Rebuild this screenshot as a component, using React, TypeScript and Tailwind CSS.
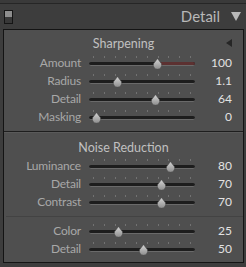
import React from "react";

type Row = { label: string; value: string; pos: number; red?: boolean };

const sharpening: Row[] = [
  { label: "Amount", value: "100", pos: 64, red: true },
  { label: "Radius", value: "1.1", pos: 26 },
  { label: "Detail", value: "64", pos: 62 },
  { label: "Masking", value: "0", pos: 6.5 },
];

const noise: Row[] = [
  { label: "Luminance", value: "80", pos: 76 },
  { label: "Detail", value: "70", pos: 68 },
  { label: "Contrast", value: "70", pos: 68 },
];

const color: Row[] = [
  { label: "Color", value: "25", pos: 27 },
  { label: "Detail", value: "50", pos: 51 },
];

function Thumb() {
  return (
    <svg width="11" height="11" viewBox="0 0 11 11">
      <defs>
        <linearGradient id="tg" x1="0" y1="0" x2="0" y2="1">
          <stop offset="0" stopColor="#d6d6d6" />
          <stop offset="1" stopColor="#8c8c8c" />
        </linearGradient>
      </defs>
      <path d="M5.5 0.5 L9.4 5.6 A4.2 4.2 0 1 1 1.6 5.6 Z" fill="url(#tg)" stroke="#3a3a3a" strokeWidth="0.6" />
    </svg>
  );
}

function Slider({ row }: { row: Row }) {
  return (
    <div className="flex h-[18px] items-center">
      <div className="w-[77px] text-right text-[12px] leading-none tracking-[-0.2px] text-[#a8a8a8]">{row.label}</div>
      <div className="relative ml-[8px] h-[18px] w-[106px]">
        {/* tick marks */}
        <div className="absolute left-[4px] right-[4px] top-[2px] flex justify-between">
          {Array.from({ length: 10 }).map((_, i) => (
            <div key={i} className="h-[2px] w-px bg-[#727272]" />
          ))}
        </div>
        <div className="absolute left-0 right-0 top-[8px] h-[4px] overflow-hidden rounded-full border-b border-[#6a6a6a] bg-[#1d1d1d]">
          {row.red && (
            <div
              className="absolute bottom-0 right-0 top-0 bg-[#5c3131]"
              style={{ left: `${row.pos}%` }}
            />
          )}
        </div>
        <div className="absolute top-[4px] -ml-[5px]" style={{ left: `${row.pos}%` }}>
          <Thumb />
        </div>
      </div>
      <div className="w-[37px] text-right text-[12px] leading-none text-[#e2e2e2]">{row.value}</div>
    </div>
  );
}

export default function App() {
  return (
    <div
      className="h-[267px] w-[246px] overflow-hidden bg-[#3d3d3d]"
      style={{ fontFamily: 'Lato, "Open Sans", sans-serif' }}
    >
      <div className="h-[3px] bg-[#3a3a3a]" />
      <div className="h-px bg-[#262626]" />
      <div className="flex h-[25px] items-center pl-[4px] pr-[5px]">
        <div className="flex h-[14px] w-[9px] flex-col border border-[#151515]">
          <div className="h-1/2 bg-[#8e8e8e]" />
          <div className="h-1/2 bg-[#383838]" />
        </div>
        <div className="ml-auto text-[15px] leading-none text-[#b8b8b8]">Detail</div>
        <svg width="10" height="9" viewBox="0 0 10 9" className="ml-[11px]">
          <path d="M0 0 L10 0 L5 9 Z" fill="#b8b8b8" />
        </svg>
      </div>
      <div className="ml-[3px] h-[234px] w-[241px] border border-[#141414] bg-[#4f4f4f]">
        <div className="relative h-[24px] pt-[6px] text-center text-[12.5px] leading-[16px] text-[#c0c0c0]">
          Sharpening
          <svg width="6" height="8" viewBox="0 0 6 8" className="absolute right-[11px] top-[9px]">
            <path d="M6 0 L6 8 L0 4 Z" fill="#262626" />
          </svg>
        </div>
        {sharpening.map((r) => (
          <Slider key={r.label} row={r} />
        ))}
        <div className="mt-[5px] h-px bg-[#1e1e1e]" />
        <div className="h-px bg-[#5a5a5a]" />
        <div className="h-[24px] pt-[7px] text-center text-[12.5px] leading-[16px] text-[#c0c0c0]">
          Noise Reduction
        </div>
        {noise.map((r) => (
          <Slider key={r.label} row={r} />
        ))}
        <div className="ml-[2px] mt-[5px] h-px bg-[#434343]" />
        <div className="h-[5px]" />
        {color.map((r) => (
          <Slider key={r.label} row={r} />
        ))}
      </div>
    </div>
  );
}
